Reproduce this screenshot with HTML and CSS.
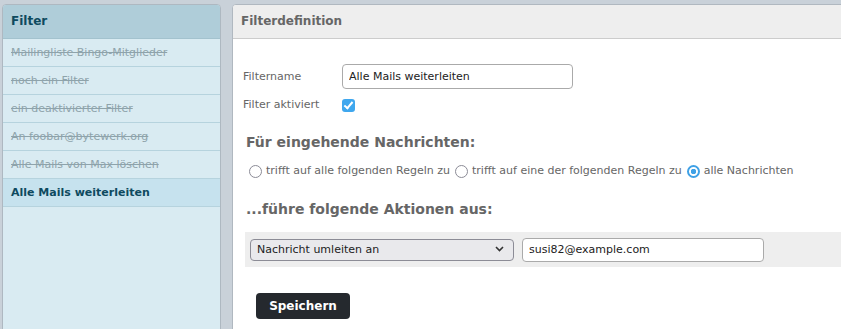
FILE: index.html
```html
<!DOCTYPE html>
<html lang="de">
<head>
  <meta charset="UTF-8"/>
  <title>Filter</title>
  <link rel="stylesheet" href="styles.css">
</head>
<body>
  <div class="page">
    <div class="sidebar">
      <div class="sidebar-head">Filter</div>
      <ul class="filter-list">
        <li class="disabled">Mailingliste Bingo-Mitglieder</li>
        <li class="disabled">noch ein Filter</li>
        <li class="disabled">ein deaktivierter Filter</li>
        <li class="disabled">An foobar@bytewerk.org</li>
        <li class="disabled">Alle Mails von Max löschen</li>
        <li class="active">Alle Mails weiterleiten</li>
      </ul>
    </div>

    <div class="main">
      <div class="main-head">Filterdefinition</div>

      <div class="form-grid">
        <label for="fname">Filtername</label>
        <input id="fname" class="text-input name-input" type="text" value="Alle Mails weiterleiten">
        <label for="factive">Filter aktiviert</label>
        <div><input id="factive" class="check" type="checkbox" checked></div>
      </div>

      <h2 class="section-title">Für eingehende Nachrichten:</h2>
      <div class="radios">
        <label><input type="radio" name="match"> trifft auf alle folgenden Regeln zu</label>
        <label><input type="radio" name="match"> trifft auf eine der folgenden Regeln zu</label>
        <label><input type="radio" name="match" checked> alle Nachrichten</label>
      </div>

      <h2 class="section-title second">...führe folgende Aktionen aus:</h2>
      <div class="action-row">
        <div class="select-wrap">
          <select class="action-select">
            <option>Nachricht umleiten an</option>
            <option>Nachricht löschen</option>
          </select>
          <svg class="chevron" width="9" height="6" viewBox="0 0 9 6"><path d="M1 1l3.5 3.5L8 1" fill="none" stroke="#333" stroke-width="1.6"/></svg>
        </div>
        <input class="text-input target-input" type="text" value="susi82@example.com">
      </div>

      <button class="save-btn">Speichern</button>
    </div>
  </div>
</body>
</html>
```

FILE: styles.css
```css
* {
  box-sizing: border-box;
  margin: 0;
  padding: 0;
}

body {
  font-family: "DejaVu Sans", Verdana, sans-serif;
  background: #c9d1d9;
  color: #666;
  overflow: hidden;
}

.page {
  display: flex;
  gap: 11px;
  padding: 4px 0 0 2px;
  height: 360px;
}

.sidebar {
  width: 219px;
  flex-shrink: 0;
  background: #d9ebf2;
  border: 1px solid #aeb8c1;
  border-radius: 4px 4px 0 0;
  overflow: hidden;
}

.sidebar-head {
  height: 34px;
  line-height: 33px;
  padding-left: 8px;
  background: #afcdd9;
  border-bottom: 1px solid #a3c2ce;
  color: #0e4a5f;
  font-size: 12px;
  font-weight: bold;
}

.filter-list {
  list-style: none;
}

.filter-list li {
  height: 28px;
  line-height: 27px;
  padding-left: 8px;
  font-size: 11px;
  border-bottom: 1px solid #b6d3de;
}

.filter-list .disabled {
  color: #8ea3ab;
  text-decoration: line-through;
}

.filter-list .active {
  background: #c6e2ee;
  color: #0e4a5f;
  font-weight: bold;
}

.main {
  flex: 1;
  margin-right: -6px;
  background: #fff;
  border: 1px solid #b0b8c0;
  border-radius: 4px 4px 0 0;
  overflow: hidden;
}

.main-head {
  height: 34px;
  line-height: 33px;
  padding-left: 8px;
  background: #eeeeee;
  border-bottom: 1px solid #cccccc;
  color: #666;
  font-size: 12px;
  font-weight: bold;
}

.form-grid {
  display: grid;
  grid-template-columns: 99px auto;
  grid-template-rows: 25px 31px;
  align-items: center;
  justify-items: start;
  margin: 25px 0 0 10px;
  font-size: 11px;
}

.text-input {
  font-family: "DejaVu Sans", Verdana, sans-serif;
  font-size: 11px;
  color: #222;
  border: 1px solid #aaa;
  border-radius: 4px;
  padding: 0 6px;
  outline: none;
}

.name-input {
  width: 231px;
  height: 25px;
}

.check {
  appearance: none;
  display: block;
  width: 13px;
  height: 13px;
  margin: 1px 0 0 0;
  border-radius: 3px;
  background: #3fa7ee;
  position: relative;
}

.check::after {
  content: "";
  position: absolute;
  left: 4px;
  top: 1px;
  width: 3px;
  height: 7px;
  border: solid #fff;
  border-width: 0 2px 2px 0;
  transform: rotate(40deg);
}

.section-title {
  font-size: 14px;
  font-weight: bold;
  color: #666;
  line-height: 20px;
  margin: 12px 0 0 13px;
}

.section-title.second {
  margin-top: 19px;
}

.radios {
  display: flex;
  gap: 5px;
  margin: 10px 0 0 16px;
  font-size: 11px;
  line-height: 18px;
}

.radios label {
  display: flex;
  align-items: center;
  gap: 4px;
}

.radios input {
  appearance: none;
  width: 13px;
  height: 13px;
  margin: 0;
  border: 1.5px solid #8b8b96;
  border-radius: 50%;
  background: #fff;
}

.radios input:checked {
  border: 2px solid #3fa1e6;
  background: radial-gradient(circle, #3fa1e6 0 2.5px, #fff 3px);
}

.action-row {
  display: flex;
  align-items: center;
  gap: 8px;
  height: 35px;
  margin: 13px 0 0 12px;
  padding-left: 5px;
  background: #eeeeee;
}

.select-wrap {
  position: relative;
}

.action-select {
  appearance: none;
  width: 264px;
  height: 22px;
  padding: 0 6px;
  font-family: "DejaVu Sans", Verdana, sans-serif;
  font-size: 11px;
  color: #222;
  background: #e9e9ec;
  border: 1px solid #8c8c96;
  border-radius: 4px;
}

.chevron {
  position: absolute;
  right: 10px;
  top: 8px;
}

.target-input {
  width: 242px;
  height: 24px;
}

.save-btn {
  display: block;
  margin: 26px 0 0 23px;
  width: 94px;
  height: 26px;
  background: #25292e;
  color: #fff;
  border: none;
  border-radius: 4px;
  font-family: "DejaVu Sans", Verdana, sans-serif;
  font-size: 12px;
  font-weight: bold;
  cursor: pointer;
}
```
